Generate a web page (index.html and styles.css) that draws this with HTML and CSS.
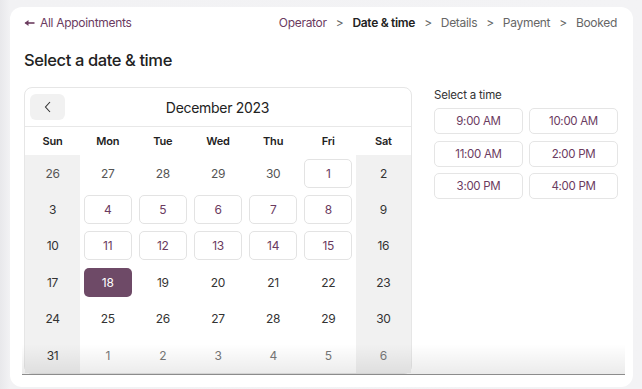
FILE: index.html
```html
<!DOCTYPE html>
<html lang="en">
<head>
<meta charset="utf-8">
<title>Select a date &amp; time</title>
<link rel="stylesheet" href="styles.css">
</head>
<body>
<div class="card">
  <div class="viewport">
    <div class="topbar">
      <a href="#" class="back-link">
        <svg width="11" height="8" viewBox="0 0 11 8"><path d="M1.5 4H10.5" stroke="#6b3b5f" stroke-width="1.6"/><path d="M0.5 4L4.5 1V7Z" fill="#6b3b5f"/></svg>
        All Appointments
      </a>
      <div class="steps">
        <span class="step done">Operator</span><span class="sep">&gt;</span>
        <span class="step current">Date &amp; time</span><span class="sep">&gt;</span>
        <span class="step">Details</span><span class="sep">&gt;</span>
        <span class="step">Payment</span><span class="sep">&gt;</span>
        <span class="step">Booked</span>
      </div>
    </div>

    <h1 class="title">Select a date &amp; time</h1>

    <div class="main">
      <div class="calendar">
        <div class="cal-head">
          <button class="prev">
            <svg width="10" height="12" viewBox="0 0 10 12"><path d="M7 1L2.5 6L7 11" stroke="#333" stroke-width="1.1" fill="none"/></svg>
          </button>
          <div class="month">December 2023</div>
          <div class="spacer"></div>
        </div>
        <div class="grid">
          <div class="wd">Sun</div><div class="wd">Mon</div><div class="wd">Tue</div><div class="wd">Wed</div><div class="wd">Thu</div><div class="wd">Fri</div><div class="wd">Sat</div>

          <div class="day we other"><span>26</span></div>
          <div class="day other"><span>27</span></div>
          <div class="day other"><span>28</span></div>
          <div class="day other"><span>29</span></div>
          <div class="day other"><span>30</span></div>
          <div class="day"><span class="open">1</span></div>
          <div class="day we"><span>2</span></div>

          <div class="day we"><span>3</span></div>
          <div class="day"><span class="open">4</span></div>
          <div class="day"><span class="open">5</span></div>
          <div class="day"><span class="open">6</span></div>
          <div class="day"><span class="open">7</span></div>
          <div class="day"><span class="open">8</span></div>
          <div class="day we"><span>9</span></div>

          <div class="day we"><span>10</span></div>
          <div class="day"><span class="open">11</span></div>
          <div class="day"><span class="open">12</span></div>
          <div class="day"><span class="open">13</span></div>
          <div class="day"><span class="open">14</span></div>
          <div class="day"><span class="open">15</span></div>
          <div class="day we"><span>16</span></div>

          <div class="day we"><span>17</span></div>
          <div class="day"><span class="selected">18</span></div>
          <div class="day"><span>19</span></div>
          <div class="day"><span>20</span></div>
          <div class="day"><span>21</span></div>
          <div class="day"><span>22</span></div>
          <div class="day we"><span>23</span></div>

          <div class="day we"><span>24</span></div>
          <div class="day"><span>25</span></div>
          <div class="day"><span>26</span></div>
          <div class="day"><span>27</span></div>
          <div class="day"><span>28</span></div>
          <div class="day"><span>29</span></div>
          <div class="day we"><span>30</span></div>

          <div class="day we"><span>31</span></div>
          <div class="day next"><span>1</span></div>
          <div class="day next"><span>2</span></div>
          <div class="day next"><span>3</span></div>
          <div class="day next"><span>4</span></div>
          <div class="day next"><span>5</span></div>
          <div class="day we next"><span>6</span></div>
        </div>
      </div>

      <div class="times">
        <div class="times-label">Select a time</div>
        <div class="slots">
          <button class="slot">9:00 AM</button>
          <button class="slot">10:00 AM</button>
          <button class="slot">11:00 AM</button>
          <button class="slot">2:00 PM</button>
          <button class="slot">3:00 PM</button>
          <button class="slot">4:00 PM</button>
        </div>
      </div>
    </div>
  </div>
</div>
</body>
</html>
```

FILE: styles.css
```css
*{ margin:0; padding:0; box-sizing:border-box;}
body{ background:linear-gradient(to right,#e8e8eb 0,#f2f2f4 10px,#f3f3f5 100%); padding:7px 9px 0 10px; font-family:Inter,"Liberation Sans",sans-serif; color:#222; height:389px; overflow:hidden;}
.card{ background:#fff; border-radius:12px; height:380px; padding:0 8px 0 12px;}
.viewport{ height:368px; overflow:hidden; position:relative; border-bottom:1px solid #8c8c8c; padding:0 8px 0 2px;}
.viewport:after{ content:""; position:absolute; left:0; right:0; bottom:0; height:30px; background:linear-gradient(rgba(0,0,0,0),rgba(0,0,0,0.08));}

.topbar{ display:flex; justify-content:space-between; align-items:center; padding-top:8px; font-size:12px; line-height:16px; letter-spacing:-0.3px;}
.back-link{ color:#6b3b5f; text-decoration:none; display:flex; align-items:center; gap:5px;}
.steps{ display:flex; align-items:center; color:#666;}
.sep{ margin:0 9px; color:#666;}
.step.done{ color:#6b3b5f;}
.step.current{ color:#222; font-weight:600;}

.title{ font-size:16.5px; font-weight:500; line-height:22px; margin-top:18px; letter-spacing:-0.4px;}

.main{ display:flex; gap:22px; margin-top:16px;}
.calendar{ width:388px; flex:none; border:1px solid #e6e6e6; border-radius:8px;}
.cal-head{ display:flex; align-items:center; height:39px; border-bottom:1px solid #e8e8e8; padding:0 6px 0 5px;}
.prev{ width:35px; height:26px; border:0; border-radius:6px; background:#f1f1f1; display:flex; align-items:center; justify-content:center;}
.month{ flex:1; text-align:center; font-size:14px; color:#222; letter-spacing:-0.3px;}
.spacer{ width:35px;}

.grid{ display:grid; grid-template-columns:repeat(7,1fr);}
.wd{ height:28px; line-height:28px; text-align:center; font-size:11px; font-weight:600; color:#222; letter-spacing:-0.2px;}
.day{ height:36.4px; display:flex; align-items:center; justify-content:center; font-size:12px; color:#333; letter-spacing:-0.3px;}
.day.we{ background:#f1f1f1;}
.day.other{ color:#555;}
.day.next{ color:#777;}
.day span{ width:48px; height:29px; display:flex; align-items:center; justify-content:center; border-radius:5px;}
.day span.open{ border:1px solid #e3e3e3; color:#6b3b5f; background:#fff;}
.day span.selected{ background:#6e4a67; color:#fff;}

.times{ width:184px;}
.times-label{ font-size:11.5px; line-height:16px; color:#333; margin-bottom:5px; letter-spacing:-0.2px;}
.slots{ display:grid; grid-template-columns:89px 89px; gap:6.5px 6px;}
.slot{ height:26px; border:1px solid #e5e5e5; border-radius:5px; background:#fff; font-family:Inter,"Liberation Sans",sans-serif; font-size:11.5px; letter-spacing:-0.3px; color:#6b3b5f;}
```
